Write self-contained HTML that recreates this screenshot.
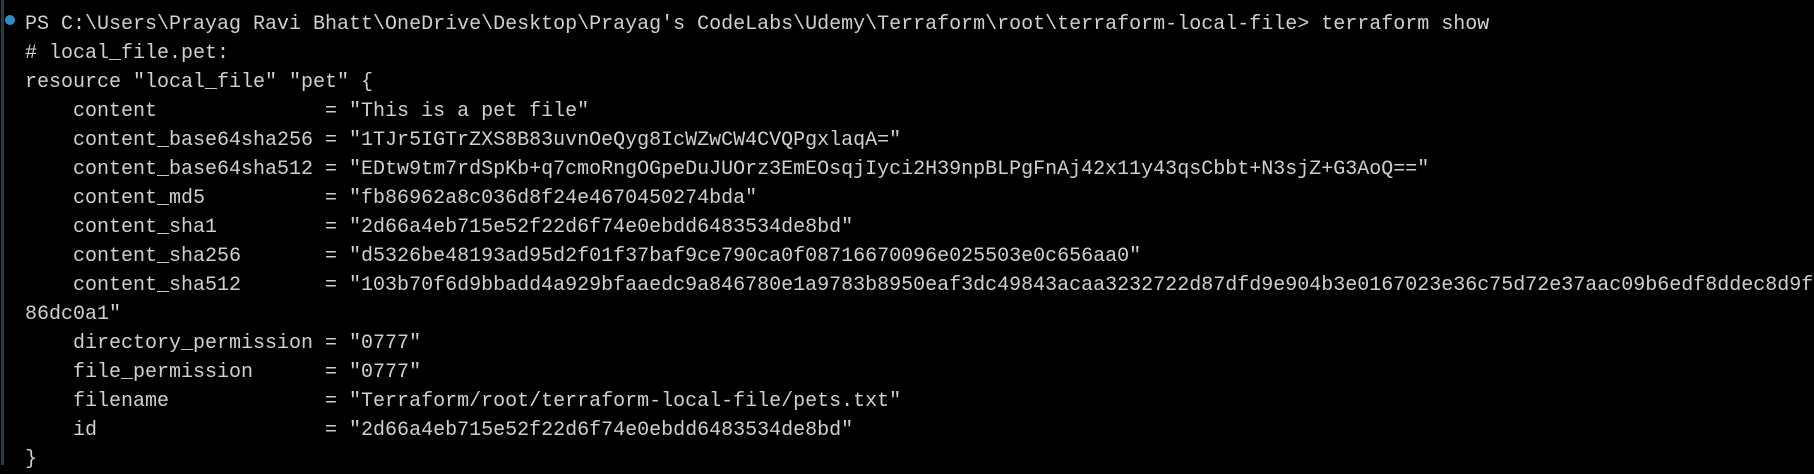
<!DOCTYPE html>
<html><head><meta charset="utf-8"><style>
html,body{margin:0;padding:0;background:#000;width:1814px;height:465px;overflow:hidden;}
.bar{position:absolute;left:1px;top:0;width:3px;height:465px;background:#1e3d55;}
.dot{position:absolute;left:5px;top:15px;width:10px;height:10px;border-radius:50%;background:#2b8fc3;}
pre{position:absolute;left:25px;top:10px;margin:0;font-family:"Liberation Mono",monospace;font-size:20px;line-height:29px;color:#d0d0d0;white-space:pre;}
</style></head><body>
<div class="bar"></div><div class="dot"></div>
<pre>PS C:\Users\Prayag Ravi Bhatt\OneDrive\Desktop\Prayag's CodeLabs\Udemy\Terraform\root\terraform-local-file> terraform show
# local_file.pet:
resource "local_file" "pet" {
    content              = "This is a pet file"
    content_base64sha256 = "1TJr5IGTrZXS8B83uvnOeQyg8IcWZwCW4CVQPgxlaqA="
    content_base64sha512 = "EDtw9tm7rdSpKb+q7cmoRngOGpeDuJUOrz3EmEOsqjIyci2H39npBLPgFnAj42x11y43qsCbbt+N3sjZ+G3AoQ=="
    content_md5          = "fb86962a8c036d8f24e4670450274bda"
    content_sha1         = "2d66a4eb715e52f22d6f74e0ebdd6483534de8bd"
    content_sha256       = "d5326be48193ad95d2f01f37baf9ce790ca0f08716670096e025503e0c656aa0"
    content_sha512       = "103b70f6d9bbadd4a929bfaaedc9a846780e1a9783b8950eaf3dc49843acaa3232722d87dfd9e904b3e0167023e36c75d72e37aac09b6edf8ddec8d9f
86dc0a1"
    directory_permission = "0777"
    file_permission      = "0777"
    filename             = "Terraform/root/terraform-local-file/pets.txt"
    id                   = "2d66a4eb715e52f22d6f74e0ebdd6483534de8bd"
}</pre>
</body></html>
